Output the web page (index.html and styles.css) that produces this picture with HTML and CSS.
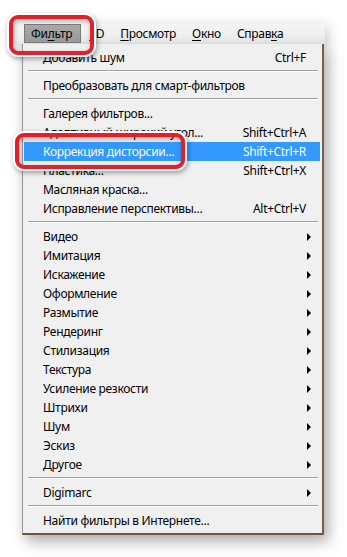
FILE: index.html
```html
<!DOCTYPE html>
<html lang="ru">
<head>
  <meta charset="UTF-8">
  <title>Фильтр</title>
  <link rel="stylesheet" href="styles.css">
</head>
<body>

  <div class="app">
    <div class="menubar">
      <span class="top-item active">Фи<u>л</u>ьтр</span>
      <span class="top-item"><u>3</u>D</span>
      <span class="top-item"><u>П</u>росмотр</span>
      <span class="top-item"><u>О</u>кно</span>
      <span class="top-item">Справ<u>к</u>а</span>
    </div>

    <div class="dropdown">
      <div class="item"><span>Добавить шум</span><span class="key">Ctrl+F</span></div>
      <div class="sep"></div>
      <div class="item"><span>Преобразовать для смарт-фильтров</span></div>
      <div class="sep"></div>
      <div class="item"><span>Галерея фильтров...</span></div>
      <div class="item"><span>Адаптивный широкий угол...</span><span class="key">Shift+Ctrl+A</span></div>
      <div class="item selected"><span>Коррекция дисторсии...</span><span class="key">Shift+Ctrl+R</span></div>
      <div class="item"><span>Пластика...</span><span class="key">Shift+Ctrl+X</span></div>
      <div class="item"><span>Масляная краска...</span></div>
      <div class="item"><span>Исправление перспективы...</span><span class="key">Alt+Ctrl+V</span></div>
      <div class="sep"></div>
      <div class="item sub"><span>Видео</span></div>
      <div class="item sub"><span>Имитация</span></div>
      <div class="item sub"><span>Искажение</span></div>
      <div class="item sub"><span>Оформление</span></div>
      <div class="item sub"><span>Размытие</span></div>
      <div class="item sub"><span>Рендеринг</span></div>
      <div class="item sub"><span>Стилизация</span></div>
      <div class="item sub"><span>Текстура</span></div>
      <div class="item sub"><span>Усиление резкости</span></div>
      <div class="item sub"><span>Штрихи</span></div>
      <div class="item sub"><span>Шум</span></div>
      <div class="item sub"><span>Эскиз</span></div>
      <div class="item sub"><span>Другое</span></div>
      <div class="sep"></div>
      <div class="item sub"><span>Digimarc</span></div>
      <div class="sep"></div>
      <div class="item"><span>Найти фильтры в Интернете...</span></div>
    </div>

    <!-- red callouts -->
    <div class="callout callout-menu"></div>
    <div class="callout callout-item"></div>
  </div>

</body>
</html>
```

FILE: styles.css
```css
body {
  margin: 0;
  background: #fff;
  font-family: "Noto Sans", "Open Sans", sans-serif;
  font-size: 12px;
  letter-spacing: -0.3px;
  color: #000;
}

.app {
  position: relative;
  width: 347px;
  height: 557px;
  padding-top: 23px;
  box-sizing: border-box;
}

.menubar {
  display: flex;
  align-items: center;
  margin-left: 15px;
  width: 310px;
  height: 21px;
  background: linear-gradient(#f4f4f4, #ececec);
  box-shadow: 2px 4px 14px rgba(0, 0, 0, 0.25);
}

.top-item {
  padding: 0 8px;
  line-height: 17px;
}

.top-item:first-child {
  margin-left: 9px;
}

.top-item u {
  text-decoration-thickness: 1px;
  text-underline-offset: 2px;
}

.top-item.active {
  padding: 0 8px 0 6px;
  background: linear-gradient(#a9a9a9, #9a9a9a);
  border: 1px solid #7a7a7a;
  box-sizing: border-box;
}

.dropdown {
  margin-left: 22px;
  width: 302px;
  box-sizing: border-box;
  padding: 4px 2px 3px 1px;
  background: #f0f0f0;
  border: 1px solid #979797;
  border-right: 2px solid #7b5c44;
  border-bottom: 2px solid #6e5640;
  border-top: none;
  box-shadow: 4px 6px 14px rgba(0, 0, 0, 0.35);
}

.item {
  display: flex;
  align-items: center;
  justify-content: space-between;
  height: 19px;
  padding: 0 14px 0 19px;
  white-space: nowrap;
}

.item.selected {
  background: #3399ff;
  color: #fff;
}

.item.sub::after {
  content: "";
  border-left: 4px solid #000;
  border-top: 4px solid transparent;
  border-bottom: 4px solid transparent;
  margin-right: -5px;
}

.sep {
  height: 9px;
  padding-top: 3px;
  box-sizing: border-box;
}

.sep::before {
  content: "";
  display: block;
  margin: 0 2px 0 4px;
  border-top: 1px solid #a0a0a0;
  border-bottom: 1px solid #fff;
}

.callout {
  position: absolute;
  border: 4px solid #e3202a;
  border-radius: 9px;
  box-shadow: 0 0 0 2px #fff, 1px 2px 5px 2px rgba(0, 0, 0, 0.35),
    inset 1px 2px 5px rgba(0, 0, 0, 0.3);
  box-sizing: border-box;
}

.callout-menu {
  left: 9px;
  top: 15px;
  width: 85px;
  height: 40px;
}

.callout-item {
  left: 15px;
  top: 133px;
  width: 170px;
  height: 36px;
}
```
